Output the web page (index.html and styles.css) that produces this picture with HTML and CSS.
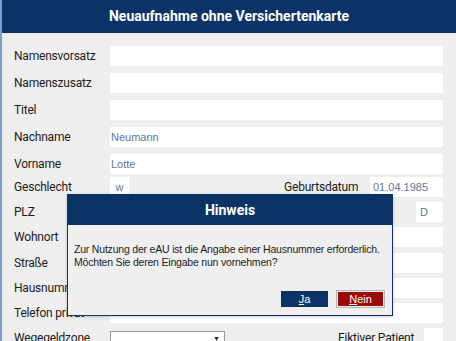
FILE: index.html
```html
<!DOCTYPE html>
<html lang="de">
<head>
    <meta charset="UTF-8">
    <title>Neuaufnahme ohne Versichertenkarte</title>
    <link rel="stylesheet" href="styles.css">
</head>
<body>
    <div class="frame">
        <div class="header">Neuaufnahme ohne Versichertenkarte</div>

        <div class="form">
            <div class="group top">
                <div class="row"><span class="label">Namensvorsatz</span><div class="field"></div></div>
                <div class="row"><span class="label">Namenszusatz</span><div class="field"></div></div>
                <div class="row"><span class="label">Titel</span><div class="field"></div></div>
                <div class="row"><span class="label">Nachname</span><div class="field">Neumann</div></div>
                <div class="row"><span class="label">Vorname</span><div class="field">Lotte</div></div>
            </div>
            <div class="group bottom">
                <div class="row">
                    <span class="label">Geschlecht</span>
                    <div class="field small center">w</div>
                    <div class="right">
                        <span class="label side">Geburtsdatum</span>
                        <div class="field date">01.04.1985</div>
                    </div>
                </div>
                <div class="row">
                    <span class="label">PLZ</span>
                    <div class="field plz"></div>
                    <div class="right"><div class="field land">D</div></div>
                </div>
                <div class="row"><span class="label">Wohnort</span><div class="field"></div></div>
                <div class="row"><span class="label">Straße</span><div class="field"></div></div>
                <div class="row"><span class="label">Hausnummer</span><div class="field"></div></div>
                <div class="row"><span class="label">Telefon privat</span><div class="field"></div></div>
                <div class="row">
                    <span class="label">Wegegeldzone</span>
                    <div class="select"><span class="arrow">&#9660;</span></div>
                    <div class="right">
                        <span class="label side">Fiktiver Patient</span>
                        <div class="field small"></div>
                    </div>
                </div>
            </div>
        </div>
    </div>

    <div class="dialog">
        <div class="dialog-title">Hinweis</div>
        <div class="dialog-body">
            <p>Zur Nutzung der eAU ist die Angabe einer Hausnummer erforderlich.<br>Möchten Sie deren Eingabe nun vornehmen?</p>
            <div class="buttons">
                <button class="btn yes"><u>J</u>a</button>
                <button class="btn no"><span><u>N</u>ein</span></button>
            </div>
        </div>
    </div>
</body>
</html>
```

FILE: styles.css
```css
body {
    margin: 0;
    font-family: Roboto, "Liberation Sans", sans-serif;
    background-color: #eeeeee;
    color: #1c1c1c;
    overflow: hidden;
}
.frame {
    border-left: 2px solid #7f9cc4;
    height: 341px;
    box-sizing: border-box;
}
.header {
    background-color: #0c3366;
    color: white;
    height: 33px;
    line-height: 33px;
    text-align: center;
    font-weight: bold;
    font-size: 14px;
}
.form {
    padding: 13px 13px 0 12px;
}
.group {
    display: flex;
    flex-direction: column;
}
.group.top {
    gap: 7px;
}
.group.bottom {
    margin-top: 3px;
    gap: 5.2px;
}
.row {
    display: flex;
    align-items: center;
    height: 20px;
}
.label {
    width: 96px;
    flex: none;
    font-size: 12px;
    letter-spacing: -0.2px;
    white-space: nowrap;
}
.label.side {
    width: 86px;
}
.field {
    flex: 1;
    height: 20px;
    background-color: white;
    font-family: "Liberation Sans", Arial, sans-serif;
    font-size: 11px;
    line-height: 20px;
    color: #5b77a3;
    padding-left: 1px;
    box-sizing: border-box;
}
.field.small {
    flex: none;
    width: 19px;
}
.field.center {
    text-align: center;
    padding-left: 0;
}
.field.date {
    flex: none;
    width: 73px;
    padding-left: 3px;
}
.field.plz {
    flex: none;
    width: 80px;
}
.field.land {
    flex: none;
    width: 27px;
    padding-left: 4px;
}
.right {
    margin-left: auto;
    display: flex;
    align-items: center;
}
.select {
    width: 115px;
    height: 20px;
    margin-top: 3px;
    align-self: flex-start;
    background-color: white;
    border: 1px solid #9a9a9a;
    box-sizing: border-box;
    position: relative;
}
.arrow {
    position: absolute;
    right: 4px;
    top: 3px;
    font-size: 7px;
    color: #222;
}
.dialog {
    position: absolute;
    left: 67px;
    top: 194px;
    width: 326px;
    height: 122px;
    border: 1px solid #0c3366;
    box-sizing: border-box;
    background-color: #efefef;
    box-shadow: 0 1px 3px rgba(0,0,0,0.2);
}
.dialog-title {
    background-color: #0c3366;
    color: white;
    height: 30px;
    line-height: 30px;
    text-align: center;
    font-weight: bold;
    font-size: 14px;
}
.dialog-body {
    padding: 18px 6px 0 6px;
}
.dialog-body p {
    margin: 0;
    font-family: "Liberation Sans", Arial, sans-serif;
    font-size: 10.5px;
    letter-spacing: -0.2px;
    line-height: 13px;
    white-space: nowrap;
    color: #1c1c1c;
}
.buttons {
    display: flex;
    justify-content: flex-end;
    gap: 8px;
    margin-top: 21px;
    margin-right: 1px;
}
.btn {
    font-family: "Liberation Sans", Arial, sans-serif;
    font-size: 11px;
    color: white;
    border: none;
    padding: 0;
    height: 16px;
    cursor: pointer;
}
.btn.yes {
    width: 47px;
    margin-top: 1px;
    background-color: #0c3366;
}
.btn.no {
    width: 49px;
    height: 18px;
    border: 1px solid #b5b5b5;
    background-color: #efefef;
    padding: 1px;
}
.btn.no span {
    display: block;
    height: 100%;
    line-height: 14px;
    background-color: #9c0a0a;
}
```
